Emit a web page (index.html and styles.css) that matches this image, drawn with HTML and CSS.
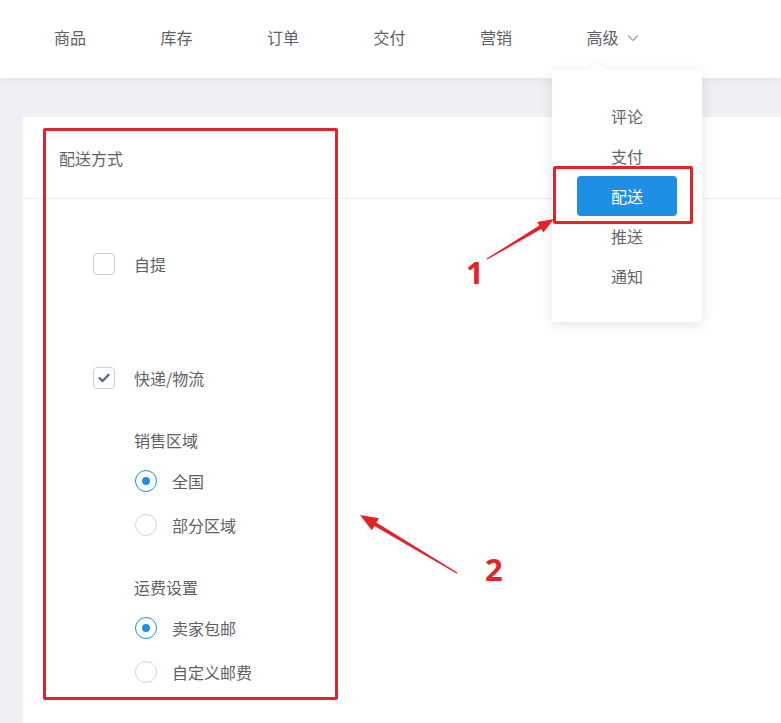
FILE: index.html
```html
<!DOCTYPE html>
<html lang="zh-CN">
<head>
<meta charset="utf-8">
<title>配送方式</title>
<link rel="stylesheet" href="styles.css">
</head>
<body>
<header class="topbar">
  <nav class="nav">
    <span class="nav-item">商品</span>
    <span class="nav-item">库存</span>
    <span class="nav-item">订单</span>
    <span class="nav-item">交付</span>
    <span class="nav-item">营销</span>
    <span class="nav-item nav-more">高级
      <svg class="chev" width="12" height="8" viewBox="0 0 12 8"><path d="M1 1.5 L6 6.5 L11 1.5" fill="none" stroke="#9a9ca3" stroke-width="1.1"/></svg>
    </span>
  </nav>
</header>

<main class="main">
  <section class="card">
    <div class="card-head">配送方式</div>
    <div class="card-body">
      <label class="check-row first">
        <span class="checkbox"></span>
        <span class="check-label">自提</span>
      </label>
      <label class="check-row second">
        <span class="checkbox checked">
          <svg width="14" height="12" viewBox="0 0 14 12"><path d="M2.5 6.2 L5.6 9 L11.5 2.8" fill="none" stroke="#5f6d86" stroke-width="2.4" stroke-linecap="round" stroke-linejoin="round"/></svg>
        </span>
        <span class="check-label">快递/物流</span>
      </label>
      <div class="sub">
        <div class="sub-title">销售区域</div>
        <div class="radio-row r1"><span class="radio on"></span><span class="radio-label">全国</span></div>
        <div class="radio-row r2"><span class="radio"></span><span class="radio-label">部分区域</span></div>
        <div class="sub-title t2">运费设置</div>
        <div class="radio-row r1"><span class="radio on"></span><span class="radio-label">卖家包邮</span></div>
        <div class="radio-row r2"><span class="radio"></span><span class="radio-label">自定义邮费</span></div>
      </div>
    </div>
  </section>
</main>

<div class="dropdown">
  <div class="dd-item">评论</div>
  <div class="dd-item">支付</div>
  <div class="dd-item active">配送</div>
  <div class="dd-item">推送</div>
  <div class="dd-item">通知</div>
</div>

<div class="mark mark-menu"></div>
<div class="mark mark-card"></div>

<svg class="arrows" width="781" height="723" viewBox="0 0 781 723">
  <polygon fill="#e42229" points="487.3,259.5 486.7,258.5 539.3,225.5 537.2,222.1 554,219 543.4,232.4 541.3,228.9"/>
  <polygon fill="#e42229" points="457.4,572.4 456.6,573.6 374.4,525.9 371.8,530.2 360,515 379,518.2 376.4,522.5"/>
</svg>
<div class="num num1">1</div>
<div class="num num2">2</div>
</body>
</html>
```

FILE: styles.css
```css
* { box-sizing: border-box; }

html, body {
  margin: 0;
  padding: 0;
}

body {
  width: 781px;
  height: 723px;
  overflow: hidden;
  background: #eff0f4;
  font-family: "Noto Sans CJK SC", "Noto Sans", sans-serif;
  color: #5f6166;
  position: relative;
}

.topbar {
  height: 78px;
  background: #fff;
  box-shadow: 0 2px 10px rgba(0, 0, 0, 0.06);
  position: relative;
  z-index: 1;
}

.nav {
  display: flex;
  align-items: center;
  height: 74px;
  padding-left: 54px;
  gap: 74.5px;
  font-size: 16px;
}

.nav-item {
  line-height: 22px;
  white-space: nowrap;
}

.nav-more {
  display: flex;
  align-items: center;
}

.chev {
  margin-left: 8px;
  margin-top: 1px;
}

.main {
  padding: 39px 0 0 23px;
}

.card {
  background: #fff;
  height: 620px;
  margin-right: -20px;
}

.card-head {
  height: 82px;
  line-height: 82px;
  padding-left: 36px;
  font-size: 16px;
  border-bottom: 1px solid #ebedf0;
}

.card-body {
  padding-left: 70px;
}

.check-row {
  display: flex;
  align-items: center;
  height: 22px;
}

.check-row.first { margin-top: 54px; }
.check-row.second { margin-top: 92px; }

.checkbox {
  width: 22px;
  height: 22px;
  border: 1px solid #cdd0d6;
  border-radius: 4px;
  background: #fff;
  display: flex;
  align-items: center;
  justify-content: center;
  flex: none;
}

.check-label {
  margin-left: 19px;
  font-size: 16px;
  line-height: 22px;
}

.sub {
  padding-left: 41px;
}

.sub-title {
  font-size: 16px;
  line-height: 22px;
  margin-top: 40px;
}

.sub-title.t2 { margin-top: 40px; }

.radio-row {
  display: flex;
  align-items: center;
  height: 22px;
  padding-left: 1px;
}

.radio-row.r1 { margin-top: 19px; }
.radio-row.r2 { margin-top: 22px; }

.radio {
  width: 22px;
  height: 22px;
  border-radius: 50%;
  border: 1px solid #d3d5da;
  background: #fff;
  flex: none;
  position: relative;
}

.radio.on {
  border-color: #1f8fe6;
}

.radio.on::after {
  content: "";
  position: absolute;
  left: 6px;
  top: 6px;
  width: 8px;
  height: 8px;
  border-radius: 50%;
  background: #1f8fe6;
}

.radio-label {
  margin-left: 15px;
  font-size: 16px;
  line-height: 22px;
}

/* dropdown menu */
.dropdown {
  position: absolute;
  left: 552px;
  top: 70px;
  width: 150px;
  height: 252px;
  background: #fff;
  border-radius: 4px;
  box-shadow: 0 3px 14px rgba(0, 0, 0, 0.1);
  padding-top: 26px;
  display: flex;
  flex-direction: column;
  align-items: center;
  z-index: 2;
}

.dropdown::before {
  content: "";
  position: absolute;
  left: 39px;
  top: -6px;
  width: 12px;
  height: 12px;
  background: #fff;
  transform: rotate(45deg);
  box-shadow: -2px -2px 4px rgba(0, 0, 0, 0.04);
}

.dd-item {
  width: 100px;
  height: 40px;
  line-height: 40px;
  text-align: center;
  font-size: 16px;
  color: #64666b;
  border-radius: 4px;
  position: relative;
}

.dd-item.active {
  background: #1f8fe6;
  color: #fff;
}

/* annotations */
.mark {
  position: absolute;
  border: 3px solid #e42229;
  z-index: 3;
}

.mark-menu {
  left: 553px;
  top: 166px;
  width: 140px;
  height: 58px;
  border-radius: 2px;
}

.mark-card {
  left: 43px;
  top: 128px;
  width: 295px;
  height: 572px;
  border-radius: 2px;
}

.arrows {
  position: absolute;
  left: 0;
  top: 0;
  z-index: 3;
}

.num {
  position: absolute;
  z-index: 3;
  font-family: "Noto Sans", "Open Sans", sans-serif;
  font-weight: 700;
  font-size: 31px;
  line-height: 31px;
  color: #e42229;
}

.num1 { left: 466px; top: 257px; }
.num2 { left: 485px; top: 554px; }
```
